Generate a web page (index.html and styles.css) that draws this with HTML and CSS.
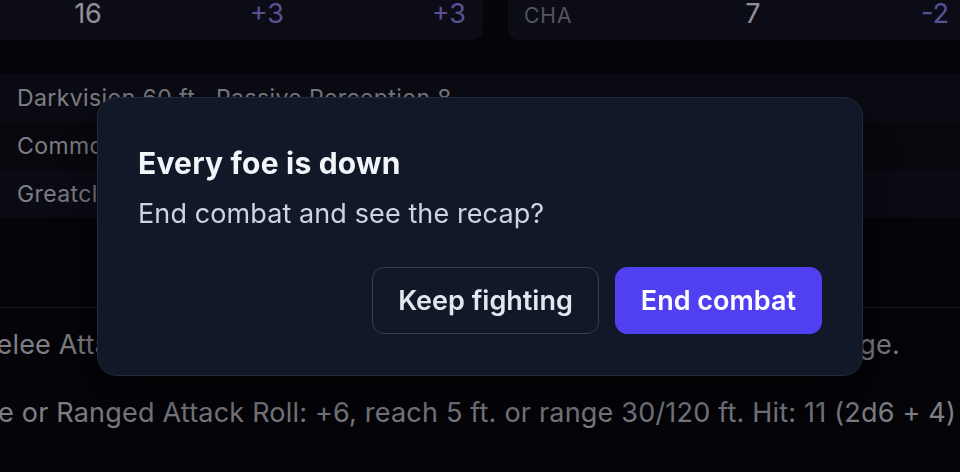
FILE: index.html
```html
<!DOCTYPE html>
<html lang="en">
<head>
<meta charset="utf-8">
<title>Combat</title>
<link rel="stylesheet" href="styles.css">
</head>
<body>
<main class="sheet">
  <div class="stats">
    <div class="stat-card">
      <span class="lbl">CON</span>
      <span class="score">16</span>
      <span class="mod">+3</span>
      <span class="mod">+3</span>
    </div>
    <div class="stat-card">
      <span class="lbl">CHA</span>
      <span class="score">7</span>
      <span class="mod">-2</span>
      <span class="mod">-2</span>
    </div>
  </div>

  <div class="traits">
    <div class="trait">Darkvision 60 ft., Passive Perception 8</div>
    <div class="trait trait-alt">Common, Giant</div>
    <div class="trait">Greatclub, Javelins</div>
  </div>

  <section class="actions">
    <div class="action action-one"><span class="action-text"><b>Greatclub.</b> Melee Attack Roll: +6, reach 5 ft. Hit: 13 (2d8 + 4) Bludgeoning damage.</span></div>
    <div class="action action-two"><span class="action-text"><b>Javelin.</b> Melee or Ranged Attack Roll: +6, reach 5 ft. or range 30/120 ft. Hit: 11 (2d6 + 4)</span><span class="tail">&nbsp;Piercing damage.</span></div>
  </section>
</main>

<div class="overlay">
  <div class="dialog" role="dialog" aria-labelledby="dlg-title">
    <h2 class="dialog-title" id="dlg-title">Every foe is down</h2>
    <p class="dialog-text">End combat and see the recap?</p>
    <div class="dialog-actions">
      <button class="btn btn-ghost" type="button">Keep fighting</button>
      <button class="btn btn-primary" type="button">End combat</button>
    </div>
  </div>
</div>
</body>
</html>
```

FILE: styles.css
```css
* { box-sizing: border-box; }

html, body {
  margin: 0;
  padding: 0;
  width: 960px;
  height: 472px;
  overflow: hidden;
  background: #07070f;
  font-family: Inter, "Noto Sans", "Liberation Sans", sans-serif;
}

.sheet {
  margin-top: -14px;
}

/* ability cards */
.stats {
  display: grid;
  grid-template-columns: 640px 640px;
  gap: 25px;
  margin-left: -157px;
}

.stat-card {
  display: grid;
  grid-template-columns: 154px 150px 121px 182px;
  align-items: baseline;
  padding: 12px 17px 8px 16px;
  background: #141426;
  border-radius: 10px;
  font-size: 27px;
  line-height: 32px;
}

.lbl {
  font-size: 21px;
  letter-spacing: 1px;
  color: #8c8c9b;
}

.score {
  text-align: center;
  color: #f0f0fa;
}

.mod {
  text-align: right;
  color: #9488f5;
}

/* traits */
.traits {
  margin-top: 34px;
}

.trait {
  height: 48px;
  padding: 0 17px;
  font-size: 23px;
  letter-spacing: 0.4px;
  line-height: 48px;
  color: #d0d0dc;
  background: #121221;
}

.trait-alt {
  background: #0c0c17;
}

/* actions */
.actions {
  margin-top: 89px;
  border-top: 1px solid #2a2a38;
  padding-top: 17px;
}

.action {
  display: flex;
  white-space: nowrap;
  font-size: 27px;
  letter-spacing: 0.2px;
  line-height: 40px;
  color: #d2d2de;
  margin-bottom: 28px;
}

.action b {
  font-weight: 700;
  font-style: italic;
}

.action-one {
  width: 900px;
  justify-content: flex-end;
}

.action-two {
  width: 956px;
  justify-content: flex-end;
}

.tail {
  width: 0;
  flex: none;
}

/* modal */
.overlay {
  position: fixed;
  inset: 0;
  display: flex;
  align-items: center;
  justify-content: center;
  background: rgba(0, 0, 0, 0.4);
}

.dialog {
  width: 766px;
  height: 279px;
  padding: 40px;
  background: #111827;
  border: 1px solid #232c3c;
  border-radius: 20px;
  box-shadow: 0 20px 50px rgba(0, 0, 0, 0.5);
}

.dialog-title {
  margin: 0;
  font-size: 30px;
  line-height: 50px;
  font-weight: 700;
  letter-spacing: 0.2px;
  color: #f1f5f9;
}

.dialog-text {
  margin: 8px 0 0;
  font-size: 27px;
  line-height: 36px;
  letter-spacing: 0.1px;
  color: #cbd5e1;
}

.dialog-actions {
  display: flex;
  justify-content: flex-end;
  gap: 16px;
  margin-top: 35px;
}

.btn {
  height: 67px;
  padding: 0 25px;
  border-radius: 12px;
  font-family: inherit;
  font-size: 27px;
  font-weight: 600;
  cursor: pointer;
}

.btn-ghost {
  background: transparent;
  border: 1.5px solid #334155;
  color: #e2e8f0;
}

.btn-primary {
  background: #5140f1;
  border: 1.5px solid #5140f1;
  color: #ffffff;
}
```
